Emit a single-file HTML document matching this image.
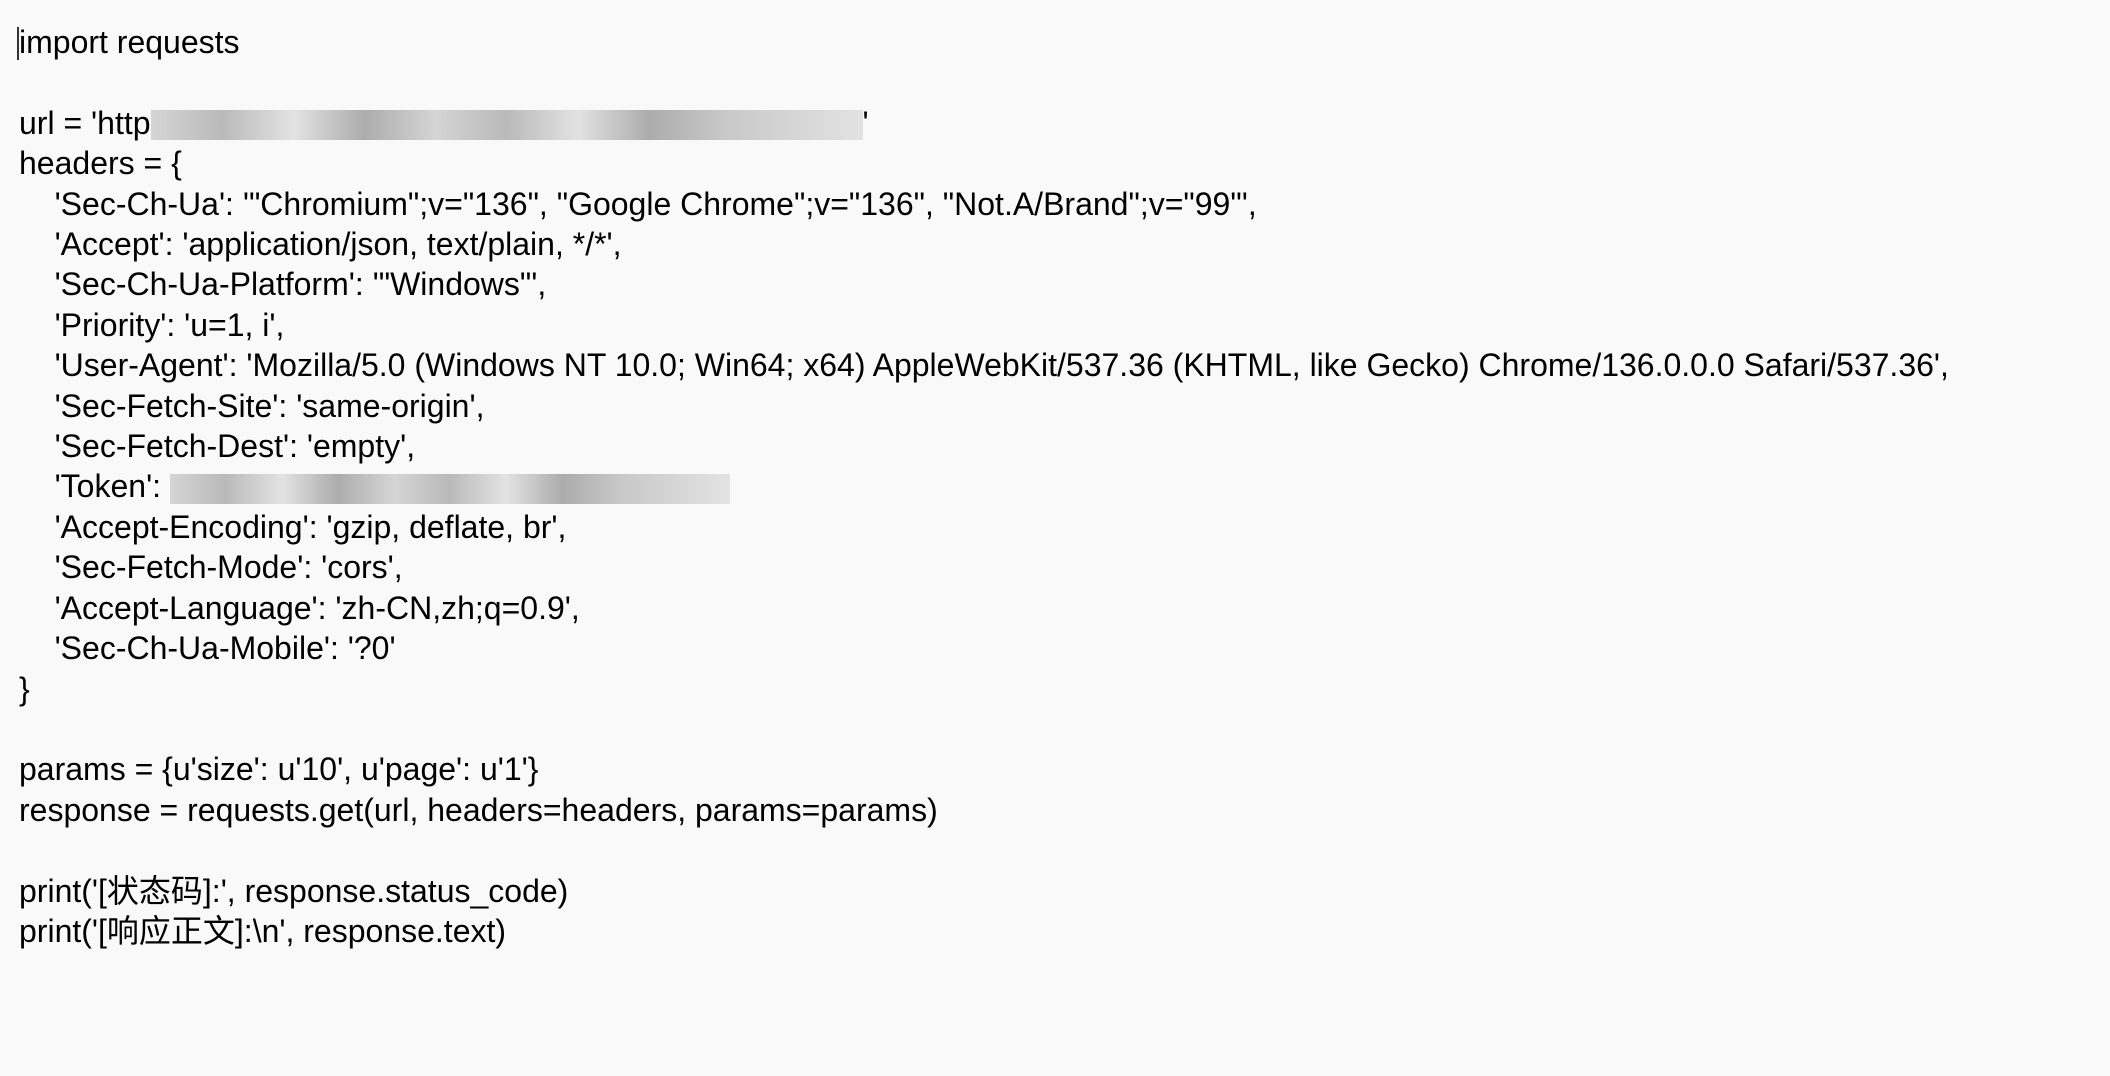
<!DOCTYPE html>
<html><head><meta charset="utf-8"><style>
html,body{margin:0;padding:0;background:#f9f9f9;width:2110px;height:1076px;overflow:hidden}
#c{position:absolute;left:19px;top:22px;font-family:"Liberation Sans","Noto Sans CJK SC",sans-serif;font-size:32px;line-height:40.4px;color:#000;white-space:pre}
.blur{display:inline-block;vertical-align:middle;height:30px;background:linear-gradient(90deg,#ccc,#aaa 10%,#ddd 20%,#999 30%,#ccc 40%,#aaa 50%,#ddd 60%,#999 70%,#bbb 80%,#ccc 90%,#ddd);opacity:.8}
#cur{position:absolute;left:17px;top:27px;width:2px;height:33px;background:#333}
</style></head><body>
<div id="cur"></div>
<div id="c">import requests

url = 'http<span class="blur" style="width:712px"></span>'
headers = {
    'Sec-Ch-Ua': '"Chromium";v="136", "Google Chrome";v="136", "Not.A/Brand";v="99"',
    'Accept': 'application/json, text/plain, */*',
    'Sec-Ch-Ua-Platform': '"Windows"',
    'Priority': 'u=1, i',
    'User-Agent': 'Mozilla/5.0 (Windows NT 10.0; Win64; x64) AppleWebKit/537.36 (KHTML, like Gecko) Chrome/136.0.0.0 Safari/537.36',
    'Sec-Fetch-Site': 'same-origin',
    'Sec-Fetch-Dest': 'empty',
    'Token': <span class="blur" style="width:560px"></span>
    'Accept-Encoding': 'gzip, deflate, br',
    'Sec-Fetch-Mode': 'cors',
    'Accept-Language': 'zh-CN,zh;q=0.9',
    'Sec-Ch-Ua-Mobile': '?0'
}

params = {u'size': u'10', u'page': u'1'}
response = requests.get(url, headers=headers, params=params)

print('[状态码]:', response.status_code)
print('[响应正文]:\n', response.text)</div>
</body></html>
